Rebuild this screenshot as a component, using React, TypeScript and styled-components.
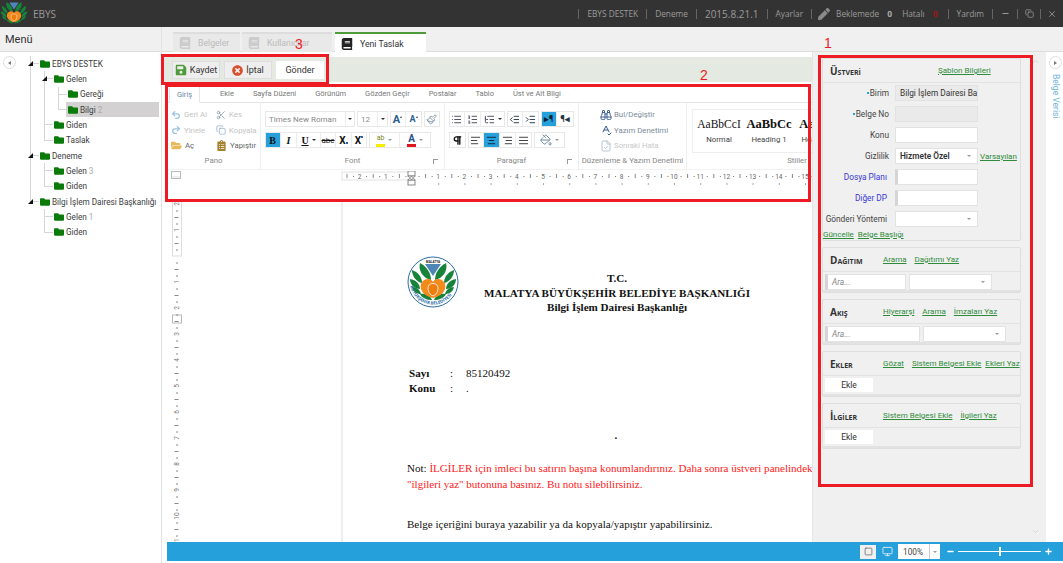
import React from 'react'
import styled, { createGlobalStyle } from 'styled-components'
import {
    Undo2, Redo2, Scissors, Copy, Pilcrow, AlignLeft, AlignCenter, AlignRight, AlignJustify, List, ListOrdered,
    ListTree, IndentIncrease, IndentDecrease, Binoculars, SpellCheck, Minus, Plus, X, ChevronUp, ChevronDown,
    PaintBucket, Paintbrush, FileCheck, Square, Monitor,
} from 'lucide-react'
import { FaBook, FaFolder, FaFolderOpen, FaPen, FaClipboardList, FaSave, FaTimesCircle } from 'react-icons/fa'

const GlobalStyle = createGlobalStyle`
    html, body { margin: 0; padding: 0; background: #fff; }
    body { font-family: Roboto, "Liberation Sans", sans-serif; font-size: 8.5px; color: #444; }
    * { box-sizing: border-box; }
`

type WidthProp = { $w?: number }
type ActiveProp = { $active?: boolean }

const Logo = ({ ring }: { ring?: boolean }) => (
    <svg width="100%" height="100%" viewBox="0 0 52 52">
        {ring && <circle cx="26" cy="26" r="25" fill="#fff" stroke="#2a6ea8" strokeWidth="1" />}
        <path d="M18 8 L34 8 L26 20 Z" fill="#4f86b5" />
        {[1, -1].map(side => (
            <g key={side} transform={side === -1 ? 'translate(52 0) scale(-1 1)' : undefined} fill="#17833a">
                <path d="M24 24 C16 22 11 15 13 7 C20 11 24 17 24 24 Z" />
                <path d="M15 27 C10 26 5 21 5 14 C11 16 15 21 15 27 Z" />
                <path d="M13 33 C8 33 3 29 3 23 C9 24 13 28 13 33 Z" />
                <path d="M14 38 C10 38 6 36 5 31 C10 31 13 34 14 38 Z" />
                <path d="M25 44 C20 44 15 42 13 38 C18 37 23 39 25 44 Z" />
            </g>
        ))}
        <path d="M26 42 C16 40 11 32 15 26 C18 22 24 22 26 26 C28 22 34 22 37 26 C41 32 36 40 26 42 Z" fill="#f28a1c" />
        <path d="M26 40 C21 38 20 32 22 29 C24 27 28 27 30 29 C32 32 31 38 26 40 Z" fill="#ef7d0c" stroke="#fff" strokeWidth="0.8" />
        {ring && (
            <>
                <defs>
                    <path id="logoArc" d="M3 24 A23 23 0 0 0 49 27" />
                </defs>
                <text fontSize="4.4" fontWeight="700" fill="#2a6ea8" fontFamily="Open Sans, sans-serif">
                    <textPath href="#logoArc" startOffset="6">BÜYÜKŞEHİR BELEDİYESİ</textPath>
                </text>
                <text x="26" y="6.5" textAnchor="middle" fontSize="3" fontWeight="700" fill="#222" fontFamily="Open Sans, sans-serif">MALATYA</text>
            </>
        )}
    </svg>
)

const HRuler = () => {
    const center = 71
    const step = 26.2
    const marks = Array.from({ length: 24 }, (_, i) => i - 3)
    return (
        <svg width="471" height="18" viewBox="0 0 471 18">
            <rect x="1" y="1" width="70" height="8" fill="#fff" stroke="#e2e2e2" />
            {marks.map(n => {
                const x = center + n * step
                return (
                    <g key={n}>
                        {n !== 0 && <text x={x} y="8" fontSize="6.5" textAnchor="middle" fill="#666" fontFamily="Roboto, sans-serif">{Math.abs(n)}</text>}
                        <rect x={x + step / 4} y="5" width="1" height="1" fill="#777" />
                        <rect x={x + step / 2} y="3" width="1" height="4" fill="#888" />
                        <rect x={x + step * 0.75} y="5" width="1" height="1" fill="#777" />
                        {n > 0 && <rect x={x} y="12" width="1" height="2" fill="#aaa" />}
                    </g>
                )
            })}
            <rect x="67" y="0" width="7" height="5" fill="#fff" stroke="#888" />
            <rect x="67" y="9" width="7" height="5" fill="#fff" stroke="#888" />
            <path d="M67 5 L74 5 L70.5 9 Z M67 9 L74 9 L70.5 5 Z" fill="#fff" stroke="#777" strokeWidth="0.7" />
        </svg>
    )
}

const VRuler = () => {
    const zero = 56
    const step = 26
    const marks = Array.from({ length: 15 }, (_, i) => i - 2)
    return (
        <svg width="10" height="342" viewBox="0 0 10 342">
            <rect x="0.5" y="0" width="9" height="56" fill="#fff" stroke="#ddd" />
            <rect x="0.5" y="115" width="9" height="8" fill="#fff" stroke="#bbb" />
            {marks.map(n => {
                const y = zero + n * step
                return (
                    <g key={n}>
                        {n !== 0 && <text x="5" y={y + 2} fontSize="6.5" textAnchor="middle" fill="#777" fontFamily="Roboto, sans-serif" transform={`rotate(-90 5 ${y})`}>{Math.abs(n)}</text>}
                        <rect x="4" y={y + step / 4} width="2" height="1" fill="#888" />
                        <rect x="2.5" y={y + step / 2} width="4" height="1" fill="#888" />
                        <rect x="4" y={y + step * 0.75} width="2" height="1" fill="#888" />
                    </g>
                )
            })}
        </svg>
    )
}

const tabs = ['Ekle', 'Sayfa Düzeni', 'Görünüm', 'Gözden Geçir', 'Postalar', 'Tablo', 'Üst ve Alt Bilgi']

const App = () => {
    return (
        <Screen>
            <GlobalStyle />
            <TopBar>
                <BrandLogo><Logo /></BrandLogo>
                <Brand>EBYS</Brand>
                <TopItems>
                    <TopSep /><TopItem>EBYS DESTEK</TopItem>
                    <TopSep /><TopItem>Deneme</TopItem>
                    <TopSep /><Version>2015.8.21.1</Version>
                    <TopSep /><TopItem>Ayarlar</TopItem>
                    <TopSep /><PenIcon><FaPen size={12} color="#8a8a8a" /></PenIcon>
                    <TopItem>Beklemede</TopItem><Count>0</Count>
                    <TopItem>Hatalı</TopItem><Count $red>0</Count>
                    <TopSep /><TopItem>Yardım</TopItem>
                    <WinControls>
                        <TopSep /><WinBtn $w={24}><Minus size={9} color="#999" strokeWidth={3} /></WinBtn>
                        <TopSep /><WinBtn $w={22}><Copy size={9} color="#999" strokeWidth={2} /></WinBtn>
                        <TopSep /><WinBtn $w={22}><X size={10} color="#999" strokeWidth={2} /></WinBtn>
                    </WinControls>
                </TopItems>
            </TopBar>

            <Body>
                <Sidebar>
                    <MenuHead>Menü</MenuHead>
                    <TreeArea>
                        <CircleBtn $left />
                        <Tree>
                            <Node>
                                <Arrow />
                                <Row><Folder /><span>EBYS DESTEK</span></Row>
                                <Tree>
                                    <Node>
                                        <Arrow />
                                        <Row><Folder /><span>Gelen</span></Row>
                                        <Tree>
                                            <Node><Row><Folder /><span>Gereği</span></Row></Node>
                                            <Node><Row $selected><Folder /><span>Bilgi <Dim>2</Dim></span></Row></Node>
                                        </Tree>
                                    </Node>
                                    <Node><Row><Folder /><span>Giden</span></Row></Node>
                                    <Node><Row><Folder /><span>Taslak</span></Row></Node>
                                </Tree>
                            </Node>
                            <Node>
                                <Arrow />
                                <Row><Folder /><span>Deneme</span></Row>
                                <Tree>
                                    <Node><Row><Folder /><span>Gelen <Dim>3</Dim></span></Row></Node>
                                    <Node><Row><Folder /><span>Giden</span></Row></Node>
                                </Tree>
                            </Node>
                            <Node>
                                <Arrow />
                                <Row><Folder /><span>Bilgi İşlem Dairesi Başkanlığı</span></Row>
                                <Tree>
                                    <Node><Row><Folder /><span>Gelen <Dim>1</Dim></span></Row></Node>
                                    <Node><Row><Folder /><span>Giden</span></Row></Node>
                                </Tree>
                            </Node>
                        </Tree>
                    </TreeArea>
                </Sidebar>

                <Main>
                    <TabStrip>
                        <PageTab $w={67}><FaBook size={12} color="#ccc" />Belgeler</PageTab>
                        <PageTab $w={90}><FaBook size={12} color="#ccc" />Kullanıcılar</PageTab>
                        <PageTab $w={91} $active><FaBook size={12} color="#222" />Yeni Taslak</PageTab>
                    </TabStrip>

                    <Content>
                        <Work>
                            <ActionBar>
                                <ActionBtn><FaSave size={12} color="#4f9a3a" />Kaydet</ActionBtn>
                                <ActionBtn><FaTimesCircle size={11} color="#d9502e" />İptal</ActionBtn>
                                <ActionBtn $plain>Gönder</ActionBtn>
                            </ActionBar>

                            <Ribbon>
                                <RibbonTabs>
                                    <RibbonTab $active>Giriş</RibbonTab>
                                    {tabs.map(item => <RibbonTab key={item}>{item}</RibbonTab>)}
                                </RibbonTabs>

                                <Groups>
                                    <Group $w={94}>
                                        <GroupBody>
                                            <PanoGrid>
                                                <PanoItem $off><Undo2 size={10} color="#9cc3e0" strokeWidth={3} />Geri Al</PanoItem>
                                                <PanoItem $off><Scissors size={10} color="#8a9bb0" />Kes</PanoItem>
                                                <PanoItem $off><Redo2 size={10} color="#9cc3e0" strokeWidth={3} />Yinele</PanoItem>
                                                <PanoItem $off><Copy size={10} color="#9cb5d0" />Kopyala</PanoItem>
                                                <PanoItem><FaFolderOpen size={11} color="#e8b85a" />Aç</PanoItem>
                                                <PanoItem><FaClipboardList size={11} color="#a5822f" />Yapıştır</PanoItem>
                                            </PanoGrid>
                                        </GroupBody>
                                        <GroupLabel>Pano</GroupLabel>
                                    </Group>

                                    <Group $w={184}>
                                        <GroupBody>
                                            <ToolRow>
                                                <ToolSet>
                                                    <ToolBtn $w={81} $text>Times New Roman</ToolBtn>
                                                    <ToolBtn $w={9}><Caret $dark /></ToolBtn>
                                                </ToolSet>
                                                <ToolSet>
                                                    <ToolBtn $w={21} $text>12</ToolBtn>
                                                    <ToolBtn $w={10}><Caret $dark /></ToolBtn>
                                                </ToolSet>
                                                <ToolSet>
                                                    <ToolBtn $w={16}><Glyph $size={11} $color="#2b5f8f" $bold>A</Glyph><TinyUp /></ToolBtn>
                                                    <ToolBtn $w={16}><Glyph $size={9} $color="#2b5f8f" $bold>A</Glyph><TinyUp /></ToolBtn>
                                                </ToolSet>
                                                <ToolSet>
                                                    <ToolBtn $w={16}><Paintbrush size={11} color="#7f93a8" /></ToolBtn>
                                                </ToolSet>
                                            </ToolRow>
                                            <ToolRow>
                                                <ToolSet>
                                                    <ToolBtn $w={16} $active><Glyph $size={10} $bold $serif>B</Glyph></ToolBtn>
                                                    <ToolBtn $w={16}><Glyph $size={10} $bold $serif $italic>I</Glyph></ToolBtn>
                                                    <ToolBtn $w={24}><Glyph $size={10} $bold $serif $line="underline">U</Glyph><Caret $dark /></ToolBtn>
                                                    <ToolBtn $w={15}><Glyph $size={8} $line="line-through">abc</Glyph></ToolBtn>
                                                    <ToolBtn $w={16}><Glyph $size={10} $bold>X</Glyph><Dot $low /></ToolBtn>
                                                    <ToolBtn $w={15}><Glyph $size={10} $bold>X</Glyph><Dot /></ToolBtn>
                                                </ToolSet>
                                                <ToolSet>
                                                    <ToolBtn $w={31}><Glyph $size={7} $color="#7a8a20" $bar="#f4ee00">ab</Glyph><Caret /></ToolBtn>
                                                    <ToolBtn $w={31}><Glyph $size={10} $color="#2b4f8f" $bold $bar="#e0141c">A</Glyph><Caret /></ToolBtn>
                                                </ToolSet>
                                            </ToolRow>
                                        </GroupBody>
                                        <GroupLabel>Font<Launcher /></GroupLabel>
                                    </Group>

                                    <Group $w={134}>
                                        <GroupBody>
                                            <ToolRow>
                                                <ToolSet>
                                                    <ToolBtn $w={16}><List size={11} color="#445" /></ToolBtn>
                                                    <ToolBtn $w={16}><ListOrdered size={11} color="#445" /></ToolBtn>
                                                    <ToolBtn $w={24}><ListTree size={11} color="#445" /><Caret $dark /></ToolBtn>
                                                </ToolSet>
                                                <ToolSet>
                                                    <ToolBtn $w={16}><IndentDecrease size={11} color="#234" /></ToolBtn>
                                                    <ToolBtn $w={16}><IndentIncrease size={11} color="#234" /></ToolBtn>
                                                </ToolSet>
                                                <ToolSet>
                                                    <ToolBtn $w={16} $active><Glyph $size={9} $color="#123" $bold>▸¶</Glyph></ToolBtn>
                                                    <ToolBtn $w={17}><Glyph $size={9} $color="#234" $bold>¶◂</Glyph></ToolBtn>
                                                </ToolSet>
                                            </ToolRow>
                                            <ToolRow>
                                                <ToolSet><ToolBtn $w={17}><Pilcrow size={11} color="#111" strokeWidth={3} /></ToolBtn></ToolSet>
                                                <ToolSet>
                                                    <ToolBtn $w={16}><AlignLeft size={11} color="#333" /></ToolBtn>
                                                    <ToolBtn $w={16} $active><AlignCenter size={11} color="#123" /></ToolBtn>
                                                    <ToolBtn $w={16}><AlignRight size={11} color="#333" /></ToolBtn>
                                                    <ToolBtn $w={16}><AlignJustify size={11} color="#333" /></ToolBtn>
                                                </ToolSet>
                                                <ToolSet><ToolBtn $w={31}><PaintBucket size={12} color="#6e8aa5" /><Caret /></ToolBtn></ToolSet>
                                            </ToolRow>
                                        </GroupBody>
                                        <GroupLabel>Paragraf<Launcher /></GroupLabel>
                                    </Group>

                                    <Group $w={108}>
                                        <GroupBody>
                                            <EditList>
                                                <EditItem><Binoculars size={12} color="#3a5f94" />Bul/Değiştir</EditItem>
                                                <EditItem><SpellCheck size={12} color="#3a5f94" />Yazım Denetimi</EditItem>
                                                <EditItem $off><FileCheck size={12} color="#b5c3d3" />Sonraki Hata</EditItem>
                                            </EditList>
                                        </GroupBody>
                                        <GroupLabel>Düzenleme &amp; Yazım Denetimi</GroupLabel>
                                    </Group>

                                    <Group $w={220} $last>
                                        <GroupBody>
                                            <Gallery>
                                                <StyleCard $w={50}><StyleSample $size={11.5}>AaBbCcI</StyleSample><StyleName>Normal</StyleName></StyleCard>
                                                <StyleCard $w={50}><StyleSample $size={12.5} $bold>AaBbCc</StyleSample><StyleName>Heading 1</StyleName></StyleCard>
                                                <StyleCard $w={50}><StyleSample $size={12.5} $bold>AaBbC</StyleSample><StyleName>Heading 2</StyleName></StyleCard>
                                            </Gallery>
                                        </GroupBody>
                                        <GroupLabel>Stiller</GroupLabel>
                                    </Group>
                                </Groups>

                                <RulerRow>
                                    <RulerCorner />
                                    <HRuler />
                                </RulerRow>
                            </Ribbon>

                            <DocArea>
                                <VRuler />
                                <Page>
                                    <Letterhead>
                                        <DocLogo><Logo ring /></DocLogo>
                                        <Heading>
                                            <div>T.C.</div>
                                            <div>MALATYA BÜYÜKŞEHİR BELEDİYE BAŞKANLIĞI</div>
                                            <div>Bilgi İşlem Dairesi Başkanlığı</div>
                                        </Heading>
                                    </Letterhead>
                                    <MetaRow><b>Sayı</b><span>:</span><span>85120492</span></MetaRow>
                                    <MetaRow><b>Konu</b><span>:</span><span>.</span></MetaRow>
                                    <CenterDot>.</CenterDot>
                                    <Note $first>
                                        Not: <Red>İLGİLER için imleci bu satırın başına konumlandırınız. Daha sonra üstveri panelindeki</Red>
                                    </Note>
                                    <Note><Red>"ilgileri yaz" butonuna basınız. Bu notu silebilirsiniz.</Red></Note>
                                    <Para>Belge içeriğini buraya yazabilir ya da kopyala/yapıştır yapabilirsiniz.</Para>
                                </Page>
                            </DocArea>
                        </Work>

                        <SidePanel>
                            <ScrollUp><ChevronUp size={9} color="#ccc" /></ScrollUp>
                            <Box>
                                <BoxHead>
                                    <BoxTitle lang="tr" $w={100}>Üstveri</BoxTitle>
                                    <GreenLink>Şablon Bilgileri</GreenLink>
                                </BoxHead>
                                <FormRows>
                                    <FormRow>
                                        <FieldLabel $req>Birim</FieldLabel>
                                        <Input $off>Bilgi İşlem Dairesi Ba:</Input>
                                    </FormRow>
                                    <FormRow>
                                        <FieldLabel $req>Belge No</FieldLabel>
                                        <Input $off />
                                    </FormRow>
                                    <FormRow>
                                        <FieldLabel>Konu</FieldLabel>
                                        <Input />
                                    </FormRow>
                                    <FormRow>
                                        <FieldLabel>Gizlilik</FieldLabel>
                                        <Input $strong>Hizmete Özel<Caret /></Input>
                                        <GreenLink>Varsayılan</GreenLink>
                                    </FormRow>
                                    <FormRow>
                                        <FieldLabel $blue>Dosya Planı</FieldLabel>
                                        <Input $grip />
                                    </FormRow>
                                    <FormRow>
                                        <FieldLabel $blue>Diğer DP</FieldLabel>
                                        <Input $grip />
                                    </FormRow>
                                    <FormRow>
                                        <FieldLabel $tight>Gönderi Yöntemi</FieldLabel>
                                        <Input><Caret /></Input>
                                    </FormRow>
                                </FormRows>
                                <BoxLinks>
                                    <GreenLink>Güncelle</GreenLink>
                                    <GreenLink>Belge Başlığı</GreenLink>
                                </BoxLinks>
                            </Box>

                            <Box>
                                <BoxHead>
                                    <BoxTitle lang="tr">Dağıtım</BoxTitle>
                                    <GreenLink>Arama</GreenLink>
                                    <GreenLink>Dağıtımı Yaz</GreenLink>
                                </BoxHead>
                                <BoxRow>
                                    <Input $grip $hint $w={81}>Ara...</Input>
                                    <Input $w={83}><Caret /></Input>
                                </BoxRow>
                            </Box>

                            <Box>
                                <BoxHead>
                                    <BoxTitle lang="tr">Akış</BoxTitle>
                                    <GreenLink>Hiyerarşi</GreenLink>
                                    <GreenLink>Arama</GreenLink>
                                    <GreenLink>İmzaları Yaz</GreenLink>
                                </BoxHead>
                                <BoxRow>
                                    <Input $grip $hint $w={95}>Ara...</Input>
                                    <Input $w={83}><Caret /></Input>
                                </BoxRow>
                            </Box>

                            <Box>
                                <BoxHead>
                                    <BoxTitle lang="tr">Ekler</BoxTitle>
                                    <GreenLink>Gözat</GreenLink>
                                    <GreenLink>Sistem Belgesi Ekle</GreenLink>
                                    <GreenLink $pull>Ekleri Yaz</GreenLink>
                                </BoxHead>
                                <BoxRow><AddBtn>Ekle</AddBtn></BoxRow>
                            </Box>

                            <Box>
                                <BoxHead>
                                    <BoxTitle lang="tr">İlgiler</BoxTitle>
                                    <GreenLink>Sistem Belgesi Ekle</GreenLink>
                                    <GreenLink>İlgileri Yaz</GreenLink>
                                </BoxHead>
                                <BoxRow><AddBtn>Ekle</AddBtn></BoxRow>
                            </Box>
                            <ScrollDown><ChevronDown size={9} color="#ccc" /></ScrollDown>
                        </SidePanel>

                        <Rail>
                            <CircleBtn />
                            <RailLabel>Belge Verisi</RailLabel>
                        </Rail>
                    </Content>

                    <StatusBar>
                        <StatusIcon $on><Square size={9} color="#666" /></StatusIcon>
                        <StatusIcon><Monitor size={11} color="#dfeaf2" /></StatusIcon>
                        <ZoomBox><span>100%</span><ZoomArrow><Caret /></ZoomArrow></ZoomBox>
                        <Minus size={9} color="#fff" strokeWidth={3.5} />
                        <Slider><SliderThumb /></Slider>
                        <Plus size={9} color="#fff" strokeWidth={3.5} />
                    </StatusBar>
                </Main>
            </Body>

            <MarkBox $x={818} $y={55} $w={215} $h={432} />
            <MarkBox $x={165} $y={84} $w={646} $h={118} />
            <MarkBox $x={161} $y={54} $w={168} $h={31} />
            <MarkNum $x={824} $y={34}>1</MarkNum>
            <MarkNum $x={700} $y={66}>2</MarkNum>
            <MarkNum $x={295} $y={35}>3</MarkNum>
        </Screen>
    )
}

const Screen = styled.div`
    position: relative;
    width: 1063px;
    height: 563px;
    overflow: hidden;
    display: flex;
    flex-direction: column;
`
const TopBar = styled.div`
    height: 27px;
    flex: none;
    background: #333;
    display: flex;
    align-items: center;
    color: #999;
    overflow: hidden;
    font-family: "Open Sans", sans-serif;
`
const BrandLogo = styled.div`
    width: 30px;
    height: 30px;
    margin: -1px 0 0 -1px;
    flex: none;
`
const Brand = styled.div`
    margin-left: 4px;
    font-size: 10px;
    color: #9a9a9a;
`
const TopItems = styled.div`
    margin-left: auto;
    display: flex;
    align-items: center;
    gap: 8px;
`
const TopSep = styled.i`
    width: 1px;
    height: 10px;
    background: #666;
`
const TopItem = styled.span`
    font-size: 8.3px;
    color: #9b9b9b;
    white-space: nowrap;
`
const Version = styled.span`
    font-size: 10px;
    color: #9b9b9b;
`
const PenIcon = styled.span`
    display: flex;
    margin: 0 -2px;
`
const Count = styled.b<{ $red?: boolean }>`
    font-size: 8.5px;
    margin: 0 2px 0 0;
    color: ${(prop) => (prop.$red ? '#a01515' : '#aaa')};
`
const WinControls = styled.div`
    display: flex;
    align-items: center;
`
const WinBtn = styled.div<WidthProp>`
    width: ${(prop) => prop.$w}px;
    display: flex;
    justify-content: center;
`
const Body = styled.div`
    flex: 1;
    display: flex;
    min-height: 0;
`
const Sidebar = styled.div`
    width: 162px;
    flex: none;
    border-right: 1px solid #e2e2e2;
    padding-right: 2px;
`
const MenuHead = styled.div`
    height: 25px;
    margin-right: -2px;
    background: #f0f0f0;
    border-bottom: 1px solid #ddd;
    font-size: 11px;
    line-height: 26px;
    padding-left: 5px;
    color: #333;
`
const TreeArea = styled.div`
    display: flex;
    align-items: flex-start;
    padding: 4px 0 0 3px;
`
const CircleBtn = styled.div<{ $left?: boolean }>`
    width: 13px;
    height: 13px;
    flex: none;
    border: 1px solid #ddd;
    border-radius: 50%;
    background: #fff;
    display: flex;
    align-items: center;
    justify-content: center;
    &::after {
        content: '';
        border-style: solid;
        border-width: 2px 0 2px 3px;
        border-color: transparent transparent transparent #777;
        transform: ${(prop) => (prop.$left ? 'rotate(180deg)' : 'none')};
    }
`
const Tree = styled.ul`
    list-style: none;
    margin: 0 0 0 14px;
    padding: 0;
    flex: 1;
    min-width: 0;
`
const Node = styled.li`
    position: relative;
    &::before {
        content: '';
        position: absolute;
        left: 0;
        top: 0;
        bottom: 0;
        width: 1px;
        background: #d5d5d5;
    }
    &:last-child::before {
        bottom: auto;
        height: 8px;
    }
    &::after {
        content: '';
        position: absolute;
        left: 0;
        top: 7px;
        width: 9px;
        height: 1px;
        background: #d5d5d5;
    }
`
const Arrow = styled.span`
    position: absolute;
    z-index: 1;
    left: -2px;
    top: 5px;
    width: 0;
    height: 0;
    border-style: solid;
    border-width: 0 0 5px 5px;
    border-color: transparent transparent #111 transparent;
`
const Row = styled.div<{ $selected?: boolean }>`
    position: relative;
    z-index: 1;
    height: 15.33px;
    margin-left: 8px;
    padding-left: 2px;
    display: flex;
    align-items: center;
    gap: 2px;
    white-space: nowrap;
    color: #3c3c3c;
    font-size: 8.2px;
    background: ${(prop) => (prop.$selected ? '#d3d1d1' : 'transparent')};
`
const Folder = styled(FaFolder)`
    width: 10px;
    height: 10px;
    flex: none;
    color: #0a7a0a;
`
const Dim = styled.span`
    color: #aaa;
`
const Main = styled.div`
    flex: 1;
    min-width: 0;
    display: flex;
    flex-direction: column;
    padding-bottom: 2px;
`
const TabStrip = styled.div`
    height: 25px;
    flex: none;
    background: #f0f0f0;
    border-bottom: 1px solid #ddd;
    padding: 5px 0 0 11px;
    display: flex;
    gap: 2px;
`
const PageTab = styled.div<WidthProp & ActiveProp>`
    width: ${(prop) => prop.$w}px;
    padding-left: 6px;
    margin-left: ${(prop) => (prop.$active ? '1px' : '0')};
    height: ${(prop) => (prop.$active ? '21px' : '20px')};
    display: flex;
    align-items: center;
    gap: 7px;
    font-size: 8.7px;
    color: ${(prop) => (prop.$active ? '#333' : '#bbb')};
    background: ${(prop) => (prop.$active ? '#fff' : '#e9e9e9')};
    border-top: 2px solid ${(prop) => (prop.$active ? '#4f9a3a' : '#ddd')};
`
const Content = styled.div`
    flex: 1;
    min-height: 0;
    display: flex;
`
const Work = styled.div`
    width: 651px;
    flex: none;
    display: flex;
    flex-direction: column;
    padding-top: 5px;
    border-right: 1px solid #e5e5e5;
`
const ActionBar = styled.div`
    height: 25px;
    flex: none;
    margin-bottom: 2px;
    background: #e4e9e2;
    padding: 4px 0 0 10px;
    display: flex;
    gap: 4px;
`
const ActionBtn = styled.div<{ $plain?: boolean }>`
    width: 48px;
    height: 18px;
    display: flex;
    align-items: center;
    justify-content: center;
    gap: 3px;
    font-size: 9px;
    color: #333;
    background: ${(prop) => (prop.$plain ? '#fff' : '#eee')};
    border: 1px solid ${(prop) => (prop.$plain ? '#fff' : '#ddd')};
`
const Ribbon = styled.div`
    height: 116px;
    flex: none;
    padding-left: 5px;
    display: flex;
    flex-direction: column;
    overflow: hidden;
`
const RibbonTabs = styled.div`
    height: 18px;
    flex: none;
    display: flex;
    align-items: center;
    gap: 19px;
    border-bottom: 1px solid #e5e5e5;
    padding-left: 2px;
    margin-top: 1px;
`
const RibbonTab = styled.div<ActiveProp>`
    font-size: 7.5px;
    color: #777;
    white-space: nowrap;
    ${(prop) => prop.$active && `
        width: 31px;
        height: 18px;
        margin-right: 1px;
        text-align: center;
        line-height: 17px;
        background: #fff;
        color: #6a8aa5;
        border: 1px solid #e5e5e5;
        border-bottom-color: #fff;
    `}
`
const Groups = styled.div`
    height: 67px;
    flex: none;
    display: flex;
    border-bottom: 1px solid #f2f2f2;
`
const Group = styled.div<WidthProp & { $last?: boolean }>`
    width: ${(prop) => prop.$w}px;
    flex: none;
    display: flex;
    flex-direction: column;
    border-right: ${(prop) => (prop.$last ? 'none' : '1px solid #eee')};
    overflow: hidden;
`
const GroupBody = styled.div`
    flex: 1;
    min-height: 0;
    padding: 8px 3px 0 4px;
    display: flex;
    flex-direction: column;
    gap: 5px;
`
const GroupLabel = styled.div`
    position: relative;
    height: 13px;
    flex: none;
    text-align: center;
    font-size: 7.8px;
    color: #888;
    white-space: nowrap;
`
const Launcher = styled.i`
    position: absolute;
    right: 6px;
    top: 3px;
    width: 5px;
    height: 5px;
    border: 1px solid #999;
    border-width: 1px 0 0 1px;
`
const PanoGrid = styled.div`
    display: grid;
    grid-template-columns: 45px 45px;
    grid-auto-rows: 15.5px;
    margin-top: -4px;
`
const PanoItem = styled.div<{ $off?: boolean }>`
    display: flex;
    align-items: center;
    gap: 3px;
    font-size: 7.8px;
    white-space: nowrap;
    color: ${(prop) => (prop.$off ? '#c4c4c4' : '#666')};
`
const ToolRow = styled.div`
    display: flex;
    gap: 2px;
    height: 16px;
`
const ToolSet = styled.div`
    display: flex;
    outline: 1px solid #e8e8e8;
    outline-offset: -1px;
`
const ToolBtn = styled.div<WidthProp & ActiveProp & { $text?: boolean }>`
    width: ${(prop) => prop.$w}px;
    height: 16px;
    display: flex;
    align-items: center;
    justify-content: ${(prop) => (prop.$text ? 'flex-start' : 'center')};
    padding-left: ${(prop) => (prop.$text ? '4px' : '0')};
    gap: 3px;
    font-size: 8px;
    color: #888;
    white-space: nowrap;
    border-right: 1px solid #ececec;
    background: ${(prop) => (prop.$active ? '#26a0da' : 'transparent')};
`
const Glyph = styled.span<{ $size: number; $color?: string; $bold?: boolean; $serif?: boolean; $italic?: boolean; $line?: string; $bar?: string }>`
    font-size: ${(prop) => prop.$size}px;
    line-height: 11px;
    color: ${(prop) => prop.$color ?? '#111'};
    font-weight: ${(prop) => (prop.$bold ? 700 : 400)};
    font-family: ${(prop) => (prop.$serif ? '"Liberation Serif", serif' : 'inherit')};
    font-style: ${(prop) => (prop.$italic ? 'italic' : 'normal')};
    text-decoration: ${(prop) => prop.$line ?? 'none'};
    border-bottom: ${(prop) => (prop.$bar ? `3px solid ${prop.$bar}` : 'none')};
    padding: ${(prop) => (prop.$bar ? '0 1px' : '0')};
`
const TinyUp = styled.i`
    width: 0;
    height: 0;
    margin: -5px 0 0 -3px;
    border-style: solid;
    border-width: 0 1.5px 2px 1.5px;
    border-color: transparent transparent #444 transparent;
`
const Dot = styled.i<{ $low?: boolean }>`
    width: 2px;
    height: 2px;
    margin: ${(prop) => (prop.$low ? '6px 0 0 -3px' : '-6px 0 0 -3px')};
    background: #2b5fa8;
`
const Caret = styled.i<{ $dark?: boolean }>`
    flex: none;
    width: 0;
    height: 0;
    border-style: solid;
    border-width: 2.5px 2px 0 2px;
    border-color: ${(prop) => (prop.$dark ? '#333' : '#999')} transparent transparent transparent;
`
const EditList = styled.div`
    padding-left: 17px;
    margin-top: -4px;
    display: flex;
    flex-direction: column;
`
const EditItem = styled.div<{ $off?: boolean }>`
    height: 15.5px;
    display: flex;
    align-items: center;
    gap: 2px;
    font-size: 7.8px;
    white-space: nowrap;
    color: ${(prop) => (prop.$off ? '#c8c8c8' : '#7d8a9a')};
`
const Gallery = styled.div`
    display: flex;
    border: 1px solid #eee;
    border-right: none;
    height: 44px;
    margin: -2px -3px 0 1px;
    overflow: hidden;
    padding-left: 1px;
`
const StyleCard = styled.div<WidthProp>`
    width: ${(prop) => prop.$w}px;
    flex: none;
    overflow: hidden;
    text-align: center;
    padding-top: 5px;
`
const StyleSample = styled.div<{ $size: number; $bold?: boolean }>`
    height: 18px;
    line-height: 18px;
    font-family: "Liberation Serif", serif;
    font-size: ${(prop) => prop.$size}px;
    font-weight: ${(prop) => (prop.$bold ? 700 : 400)};
    color: #111;
    white-space: nowrap;
    overflow: hidden;
`
const StyleName = styled.div`
    margin-top: 2px;
    font-size: 7.8px;
    color: #444;
    white-space: nowrap;
`
const RulerRow = styled.div`
    flex: 1;
    display: flex;
    align-items: flex-start;
    padding: 1px 0 0 4px;
`
const RulerCorner = styled.i`
    width: 10px;
    height: 8px;
    flex: none;
    margin-right: 160px;
    border: 1px solid #bbb;
    box-shadow: inset 0 -4px 0 -2px #eee;
`
const DocArea = styled.div`
    flex: 1;
    min-height: 0;
    display: flex;
    padding-left: 10px;
`
const Page = styled.div`
    flex: 1;
    min-width: 0;
    margin-left: 159px;
    padding: 56px 0 0 64px;
    border-left: 2px solid #eee;
    overflow: hidden;
    white-space: nowrap;
    font-family: "Liberation Serif", serif;
    font-size: 11.05px;
    color: #111;
`
const Letterhead = styled.div`
    display: flex;
    height: 110px;
`
const DocLogo = styled.div`
    width: 52px;
    height: 52px;
    flex: none;
`
const Heading = styled.div`
    margin: 15px 0 0 24px;
    width: 268px;
    text-align: center;
    font-weight: 700;
    font-size: 11.1px;
    line-height: 14.7px;
`
const MetaRow = styled.div`
    display: grid;
    grid-template-columns: 41px 16px auto;
    padding-left: 2px;
    height: 15px;
    line-height: 15px;
`
const CenterDot = styled.div`
    width: 418px;
    text-align: center;
    margin-top: 32px;
    line-height: 15px;
    font-weight: 700;
`
const Note = styled.div<{ $first?: boolean }>`
    height: 16px;
    line-height: 16px;
    margin-top: ${(prop) => (prop.$first ? '17px' : '0')};
`
const Red = styled.span`
    color: #ff2020;
`
const Para = styled.div`
    margin-top: 24px;
    line-height: 16px;
`
const SidePanel = styled.div`
    position: relative;
    width: 233px;
    flex: none;
    background: #f0f0f0;
    padding: 6px 0 0 9px;
    display: flex;
    flex-direction: column;
    gap: 6px;
`
const ScrollUp = styled.div`
    position: absolute;
    left: 218px;
    top: 5px;
`
const ScrollDown = styled.div`
    position: absolute;
    left: 218px;
    bottom: 4px;
`
const Box = styled.div`
    width: 199px;
    border: 1px solid #dedede;
    border-radius: 2px;
`
const BoxHead = styled.div`
    height: 24px;
    display: flex;
    align-items: center;
    gap: 8px;
    padding-left: 7px;
    border-bottom: 1px solid #e2e2e2;
    white-space: nowrap;
`
const BoxTitle = styled.div<WidthProp>`
    width: ${(prop) => prop.$w ?? 45}px;
    flex: none;
    font-family: "Open Sans", sans-serif;
    font-weight: 700;
    font-size: 10px;
    font-variant: small-caps;
    color: #333;
`
const GreenLink = styled.a<{ $pull?: boolean }>`
    color: #2e8b3a;
    font-size: 8px;
    text-decoration: underline;
    white-space: nowrap;
    margin-left: ${(prop) => (prop.$pull ? '-4px' : '0')};
`
const FormRows = styled.div`
    padding-top: 2px;
    display: flex;
    flex-direction: column;
    gap: 5px;
`
const FormRow = styled.div`
    display: flex;
    align-items: center;
    gap: 2px;
    height: 16px;
`
const FieldLabel = styled.div<{ $req?: boolean; $blue?: boolean; $tight?: boolean }>`
    width: 66px;
    margin-right: 4px;
    padding-right: ${(prop) => (prop.$blue || prop.$tight ? '2px' : '0')};
    text-align: right;
    white-space: nowrap;
    font-size: 8.3px;
    color: ${(prop) => (prop.$blue ? '#3838d8' : '#444')};
    ${(prop) => prop.$req && `
        &::before {
            content: '';
            display: inline-block;
            width: 2px;
            height: 2px;
            background: #26a0da;
            margin: 0 1px 2px 0;
        }
    `}
`
const Input = styled.div<WidthProp & { $off?: boolean; $grip?: boolean; $strong?: boolean; $hint?: boolean }>`
    width: ${(prop) => prop.$w ?? 83}px;
    height: 16px;
    flex: none;
    display: flex;
    align-items: center;
    padding: 0 6px 0 4px;
    overflow: hidden;
    white-space: nowrap;
    font-size: 8.3px;
    font-weight: ${(prop) => (prop.$strong ? 600 : 400)};
    font-style: ${(prop) => (prop.$hint ? 'italic' : 'normal')};
    color: ${(prop) => (prop.$hint ? '#888' : '#333')};
    background: ${(prop) => (prop.$off ? '#eaeaea' : '#fff')};
    border: 1px solid #e2e2e2;
    border-left: ${(prop) => (prop.$grip ? '3px solid #d5d5d5' : '1px solid #e2e2e2')};
    i {
        margin-left: auto;
    }
`
const BoxLinks = styled.div`
    display: flex;
    gap: 4px;
    height: 13px;
    padding: 3px 0 0 0;
`
const BoxRow = styled.div`
    display: flex;
    gap: 3px;
    height: 20px;
    padding: 2px 0 0 2px;
    border-bottom: 2px solid #e2e2e2;
`
const AddBtn = styled.div`
    width: 48px;
    height: 14px;
    background: #fff;
    text-align: center;
    line-height: 14px;
    font-size: 8.5px;
    color: #333;
`
const Rail = styled.div`
    flex: 1;
    padding: 4px 0 0 2px;
    display: flex;
    flex-direction: column;
    align-items: center;
    gap: 5px;
`
const RailLabel = styled.div`
    writing-mode: vertical-rl;
    font-size: 8.5px;
    color: #6fb4dc;
    white-space: nowrap;
`
const StatusBar = styled.div`
    height: 19px;
    flex: none;
    margin-left: 5px;
    background: #26a0da;
    display: flex;
    align-items: center;
    justify-content: flex-end;
    padding-right: 10px;
    gap: 3px;
`
const StatusIcon = styled.div<{ $on?: boolean }>`
    width: 16px;
    height: 14px;
    display: flex;
    align-items: center;
    justify-content: center;
    background: ${(prop) => (prop.$on ? '#f0f0f0' : 'transparent')};
`
const ZoomBox = styled.div`
    width: 42px;
    height: 15px;
    margin-right: 3px;
    background: #fff;
    display: flex;
    align-items: center;
    font-size: 8.3px;
    color: #444;
    padding-left: 5px;
    span {
        flex: 1;
    }
`
const ZoomArrow = styled.div`
    width: 11px;
    height: 15px;
    border-left: 1px solid #ccc;
    display: flex;
    align-items: center;
    justify-content: center;
`
const Slider = styled.div`
    position: relative;
    width: 83px;
    height: 1px;
    background: #fff;
`
const SliderThumb = styled.i`
    position: absolute;
    left: 41px;
    top: -4px;
    width: 2px;
    height: 9px;
    background: #fff;
`
const MarkBox = styled.div<{ $x: number; $y: number; $w: number; $h: number }>`
    position: absolute;
    left: ${(prop) => prop.$x}px;
    top: ${(prop) => prop.$y}px;
    width: ${(prop) => prop.$w}px;
    height: ${(prop) => prop.$h}px;
    border: 3px solid #ed1c24;
    pointer-events: none;
`
const MarkNum = styled.div<{ $x: number; $y: number }>`
    position: absolute;
    left: ${(prop) => prop.$x}px;
    top: ${(prop) => prop.$y}px;
    font-family: "Liberation Sans", sans-serif;
    font-size: 14px;
    line-height: 18px;
    color: #ed1c24;
`

export default App
